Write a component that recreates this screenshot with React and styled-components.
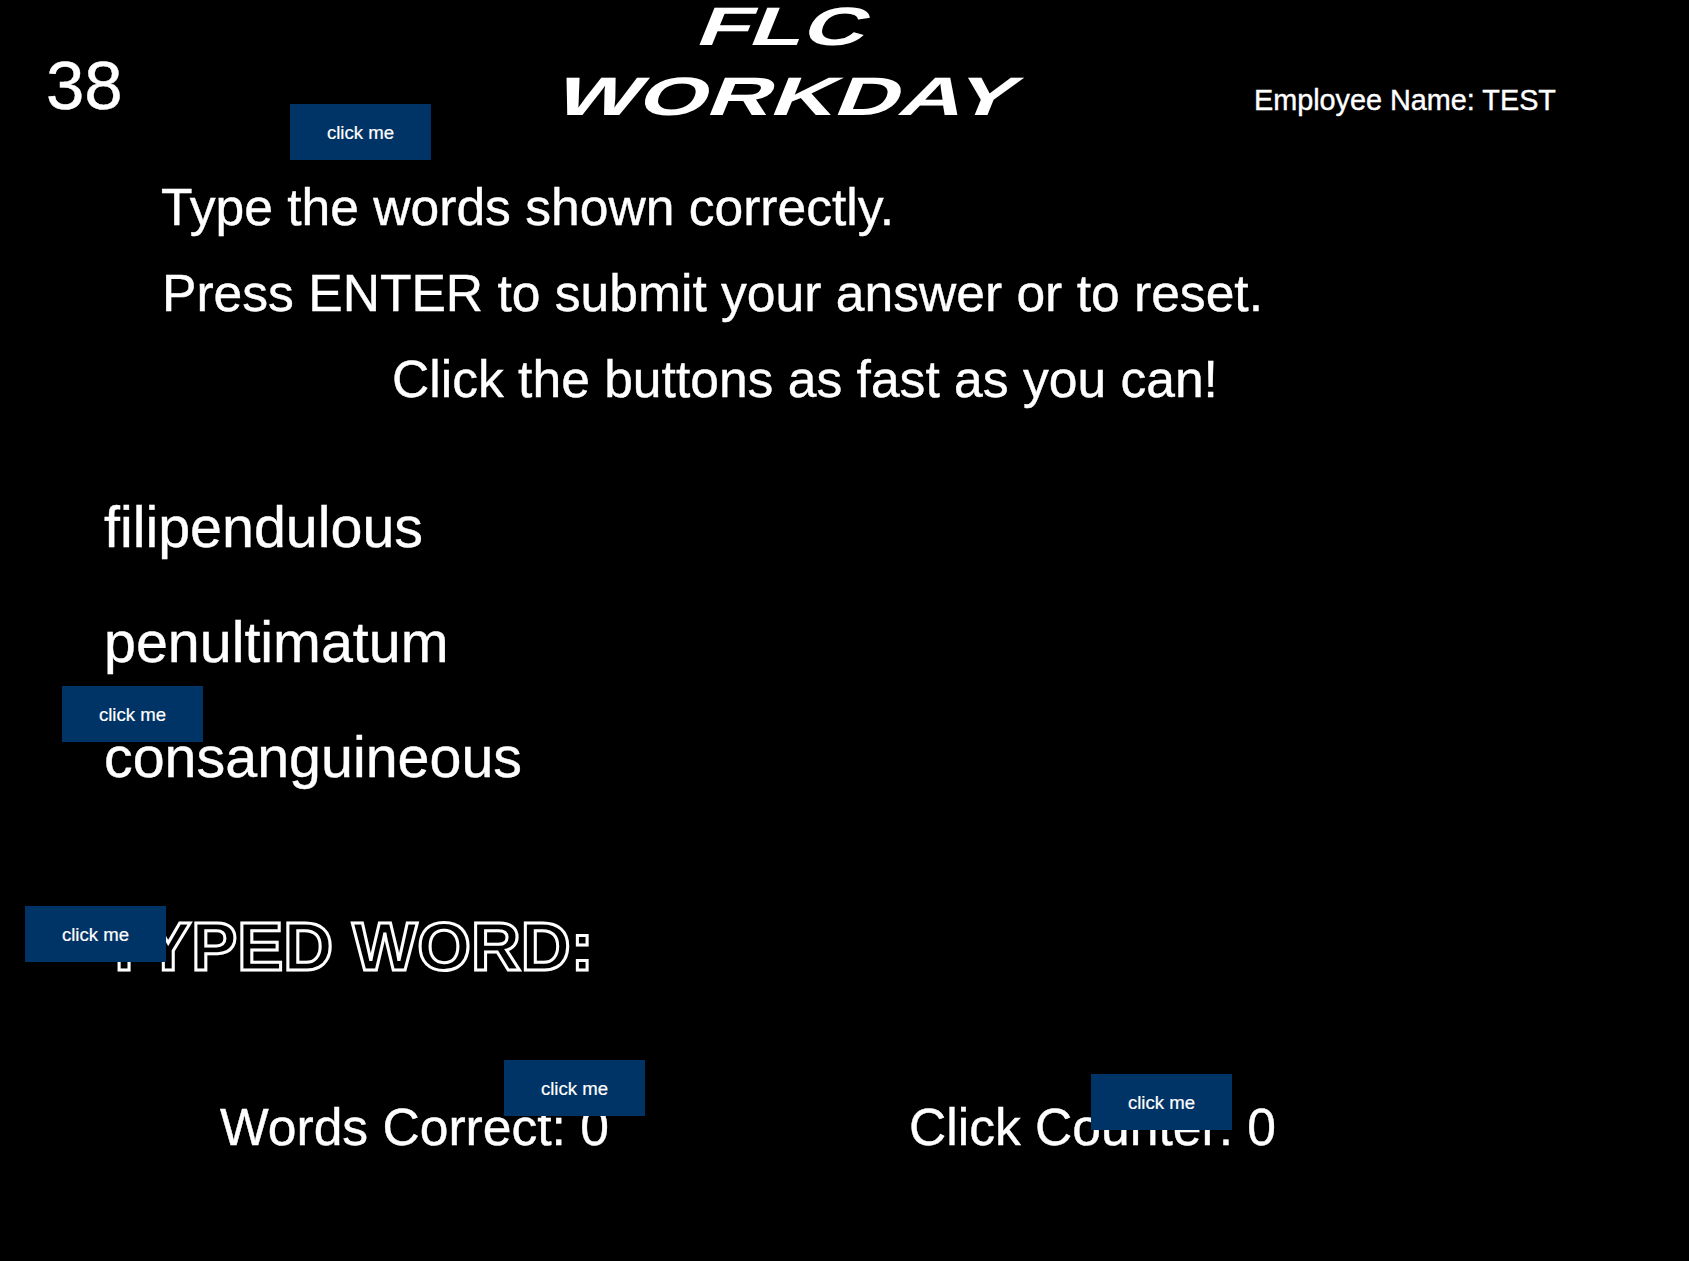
import React from "react"
import styled, { createGlobalStyle } from "styled-components"

const GlobalStyle = createGlobalStyle`
  html, body {
    margin: 0;
    padding: 0;
    background: #000;
  }
`

const Page = styled.div`
  position: relative;
  width: 1689px;
  height: 1261px;
  overflow: hidden;
  background: #000;
  color: #fff;
  font-family: "Liberation Sans", Arial, sans-serif;
  -webkit-text-stroke: 0.4px #fff;
`

// Header
const Header = styled.header`
  display: grid;
  grid-template-columns: 555px 480px 1fr;
  height: 164px;
`

const Timer = styled.div`
  padding: 46px 0 0 46px;
  font-size: 69px;
  line-height: 80px;
`

const Logo = styled.svg`
  display: block;
  width: 480px;
  height: 125px;
  overflow: visible;
`

const LogoText = styled.text`
  font-family: "Liberation Sans", Arial, sans-serif;
  font-weight: 700;
  font-size: 54px;
  fill: #fff;
`

const EmployeeName = styled.div`
  padding: 82px 0 0 219px;
  font-size: 28.8px;
  line-height: 36px;
`

// Instructions
const Instructions = styled.section`
  display: flex;
  flex-direction: column;
`

const Instruction = styled.div`
  padding-left: ${props => props.$indent}px;
  font-size: 51.6px;
  line-height: 86px;
  white-space: nowrap;
`

// Words
const WordList = styled.section`
  display: flex;
  flex-direction: column;
  margin-top: 48px;
  padding-left: 104px;
`

const Word = styled.div`
  font-size: 57.4px;
  line-height: 115px;
`

// Typed word
const TypedWord = styled.h2`
  margin: 90px 0 0 103px;
  font-size: 69px;
  font-weight: 700;
  line-height: 84px;
  white-space: nowrap;
  color: #000;
  -webkit-text-stroke: 3px #fff;
`

// Stats
const Stats = styled.section`
  display: grid;
  grid-template-columns: 689px 1fr;
  margin-top: 106px;
  padding-left: 220px;
`

const Stat = styled.div`
  font-size: 51.6px;
  line-height: 64px;
`

const ClickButton = styled.button`
  position: absolute;
  left: ${props => props.$x}px;
  top: ${props => props.$y}px;
  width: 141px;
  height: 56px;
  padding: 2px 0 0;
  border: 0;
  background: #003366;
  color: #fff;
  font-family: "Liberation Sans", Arial, sans-serif;
  font-size: 18.6px;
  -webkit-text-stroke: 0.2px #fff;
  cursor: pointer;
`

const buttons = [
  { x: 290, y: 104 },
  { x: 62, y: 686 },
  { x: 25, y: 906 },
  { x: 504, y: 1060 },
  { x: 1091, y: 1074 }
]

const App = () => (
  <Page>
    <GlobalStyle />

    <Header>
      <Timer>38</Timer>
      <Logo viewBox="0 0 480 125" role="img" aria-label="FLC WORKDAY">
        <g transform="translate(10 0) skewX(-22)">
          <LogoText x="147" y="45" textLength="168" lengthAdjust="spacingAndGlyphs">FLC</LogoText>
          <LogoText x="33" y="115" textLength="459" lengthAdjust="spacingAndGlyphs">WORKDAY</LogoText>
        </g>
      </Logo>
      <EmployeeName>Employee Name: TEST</EmployeeName>
    </Header>

    <Instructions>
      <Instruction $indent={161}>Type the words shown correctly.</Instruction>
      <Instruction $indent={162}>Press ENTER to submit your answer or to reset.</Instruction>
      <Instruction $indent={392}>Click the buttons as fast as you can!</Instruction>
    </Instructions>

    <WordList>
      <Word>filipendulous</Word>
      <Word>penultimatum</Word>
      <Word>consanguineous</Word>
    </WordList>

    <TypedWord>TYPED WORD:</TypedWord>

    <Stats>
      <Stat>Words Correct: 0</Stat>
      <Stat>Click Counter: 0</Stat>
    </Stats>

    {buttons.map(button => (
      <ClickButton key={`${button.x}-${button.y}`} $x={button.x} $y={button.y}>
        click me
      </ClickButton>
    ))}
  </Page>
)

export default App
